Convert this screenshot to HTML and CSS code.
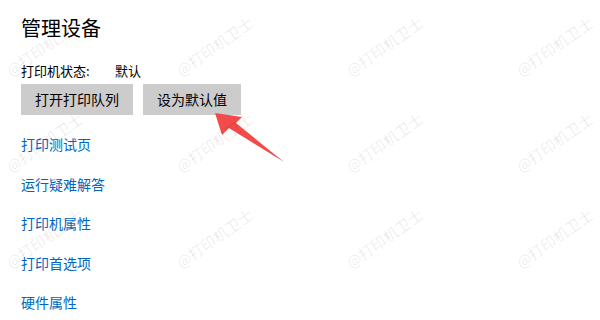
FILE: index.html
```html
<!DOCTYPE html>
<html lang="zh-CN">
<head>
<meta charset="utf-8">
<link rel="stylesheet" href="styles.css">
</head>
<body>
<div class="page">
  <h1 class="title">管理设备</h1>
  <div class="status">
    <span class="status-label">打印机状态:</span>
    <span class="status-value">默认</span>
  </div>
  <div class="buttons">
    <button class="btn">打开打印队列</button>
    <button class="btn">设为默认值</button>
  </div>
  <nav class="links">
    <a class="link">打印测试页</a>
    <a class="link">运行疑难解答</a>
    <a class="link">打印机属性</a>
    <a class="link">打印首选项</a>
    <a class="link">硬件属性</a>
  </nav>

  <svg class="arrow" width="90" height="65" viewBox="0 0 90 65">
    <polygon points="10,8 37,12 31,18 79,57 24,23 17,30" fill="#f34a4a"/>
  </svg>

  <div class="wm-layer" aria-hidden="true">
    <span class="wm">@打印机卫士</span><span class="wm">@打印机卫士</span><span class="wm">@打印机卫士</span><span class="wm">@打印机卫士</span>
    <span class="wm">@打印机卫士</span><span class="wm">@打印机卫士</span><span class="wm">@打印机卫士</span><span class="wm">@打印机卫士</span>
    <span class="wm">@打印机卫士</span><span class="wm">@打印机卫士</span><span class="wm">@打印机卫士</span><span class="wm">@打印机卫士</span>
  </div>
</div>
</body>
</html>
```

FILE: styles.css
```css
html, body {
  margin: 0;
  padding: 0;
  background: #fff;
}
body {
  width: 600px;
  height: 320px;
  overflow: hidden;
  font-family: "Noto Sans CJK SC", "Noto Sans", sans-serif;
  color: #000;
}
.page {
  position: relative;
  width: 600px;
  height: 320px;
  padding: 14px 0 0 21px;
  box-sizing: border-box;
}
.title {
  margin: 0;
  font-size: 20px;
  line-height: 28px;
  font-weight: 400;
}
.status {
  margin-top: 19px;
  display: flex;
  font-size: 13px;
  line-height: 20px;
}
.status-label {
  width: 94px;
}
.buttons {
  margin-top: 3px;
  display: flex;
  gap: 10px;
}
.btn {
  height: 31px;
  padding: 0 14px;
  border: none;
  background: #cccccc;
  color: #000;
  font-family: inherit;
  font-size: 14px;
  line-height: 31px;
}
.links {
  margin-top: 19px;
  display: flex;
  flex-direction: column;
  gap: 19.5px;
}
.link {
  color: #0067c0;
  font-size: 14px;
  line-height: 20px;
  text-decoration: none;
}
.arrow {
  position: absolute;
  left: 205px;
  top: 105px;
}
.wm-layer {
  position: absolute;
  left: 0;
  top: 0;
  width: 600px;
  height: 320px;
  padding: 64px 0 0 8px;
  box-sizing: border-box;
  display: grid;
  grid-template-columns: repeat(4, 170px);
  grid-auto-rows: 96px;
  pointer-events: none;
}
.wm {
  display: block;
  justify-self: start;
  white-space: nowrap;
  font-size: 15px;
  line-height: 16px;
  height: 16px;
  color: rgba(0, 0, 20, 0.09);
  transform: rotate(-35deg);
  transform-origin: 0 50%;
}
```
